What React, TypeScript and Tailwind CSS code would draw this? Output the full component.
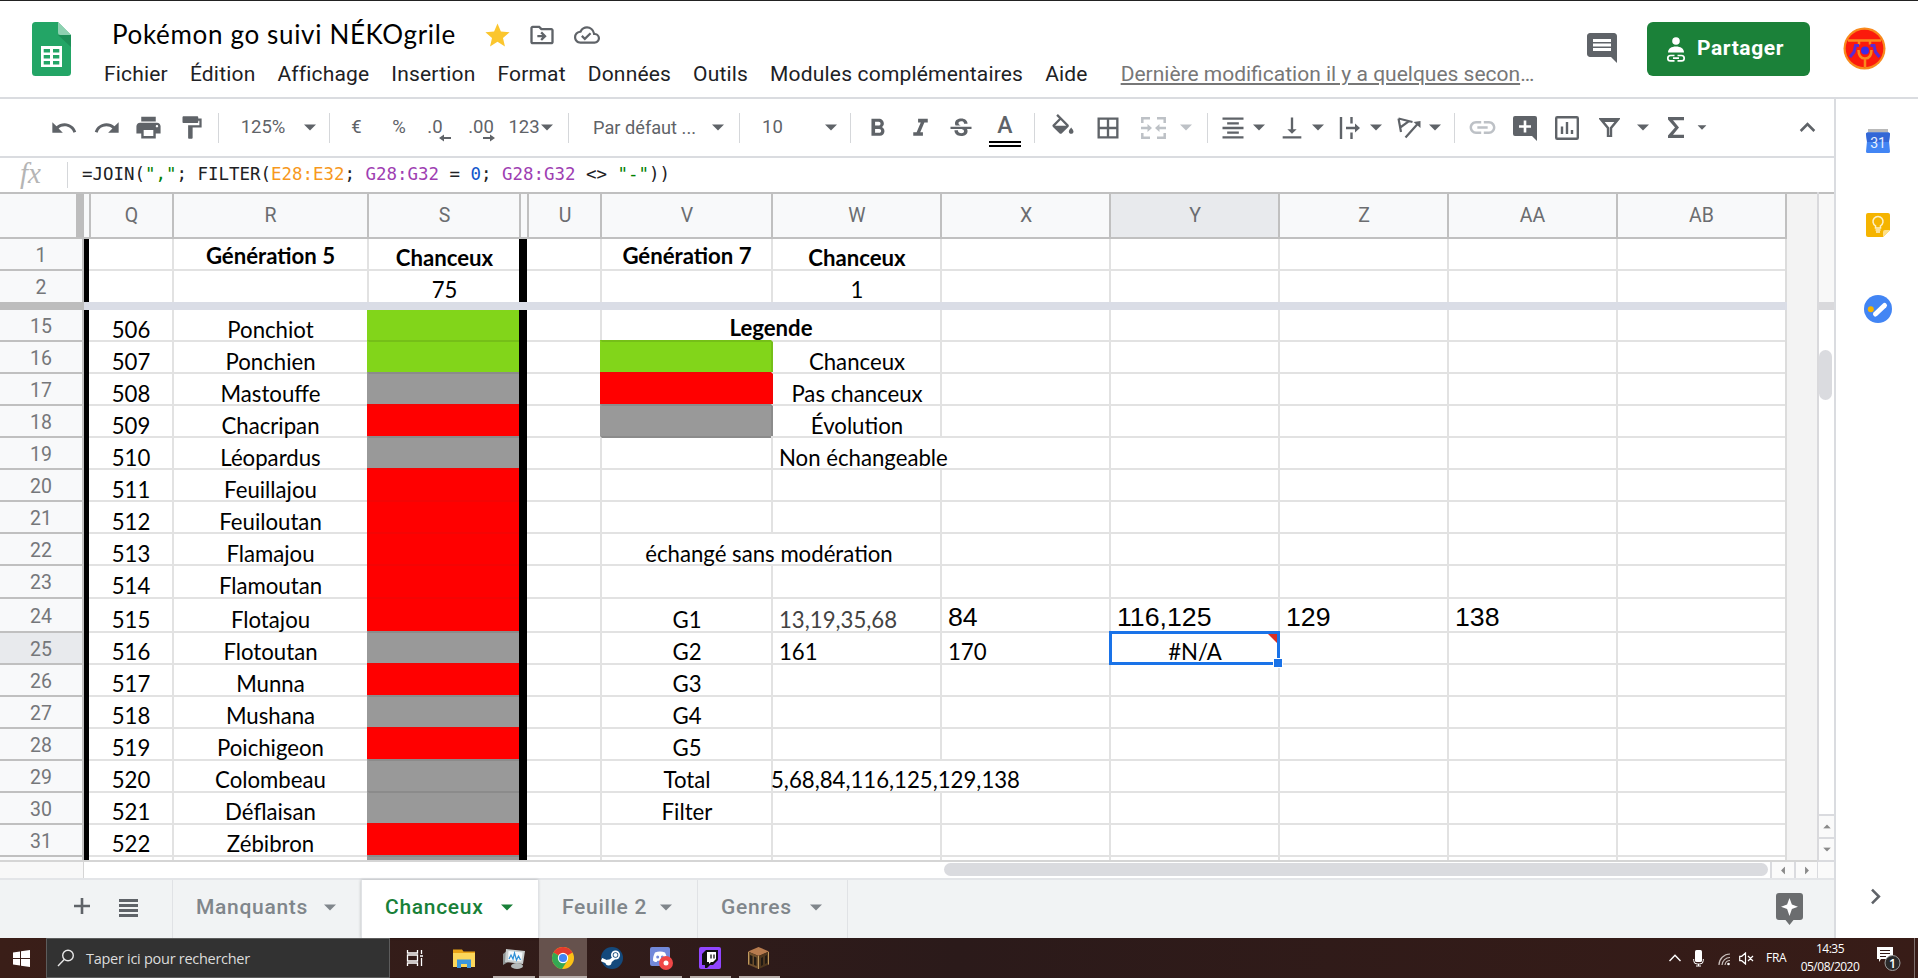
import type { ReactNode } from 'react';
import clsx from 'clsx';
import {
    MdUndo, MdRedo, MdPrint, MdFormatPaint, MdFormatBold, MdFormatItalic, MdStrikethroughS,
    MdFormatColorFill, MdBorderAll, MdFormatAlignCenter, MdVerticalAlignBottom, MdLink,
    MdKeyboardArrowUp, MdKeyboardArrowRight, MdStar, MdOutlineDriveFileMove, MdOutlineCloudDone,
} from 'react-icons/md';

type Fill = 'green' | 'gray' | 'red';

type Cell = {
    text?: string;
    fill?: Fill;
    align?: 'left' | 'center';
    className?: string;
    arial?: boolean;
    span?: boolean;
    noLine?: boolean;
};

type Row = {
    n: number;
    height: string;
    first?: boolean;
    cells: Record<string, Cell>;
};

const columns = [
    { id: 'P', width: 'w-[5px]' },
    { id: 'Q', width: 'w-[83px]' },
    { id: 'R', width: 'w-[195px]' },
    { id: 'S', width: 'w-[152px]' },
    { id: 'T', width: 'w-[8px]' },
    { id: 'U', width: 'w-[73px]' },
    { id: 'V', width: 'w-[171px]' },
    { id: 'W', width: 'w-[169px]' },
    { id: 'X', width: 'w-[169px]' },
    { id: 'Y', width: 'w-[169px]' },
    { id: 'Z', width: 'w-[169px]' },
    { id: 'AA', width: 'w-[169px]' },
    { id: 'AB', width: 'w-[169px]' },
];

const fills: Record<Fill, string> = {
    green: 'bg-[#82d51a] border-t-[#75bf18] border-l-[#82d51a]',
    gray: 'bg-[#999999] border-t-[#8b8b8b] border-l-[#999999]',
    red: 'bg-[#ff0000] border-t-[#f40404] border-l-[#ff0000]',
};

const frozenRows: Row[] = [
    {
        n: 1, height: 'h-[30px]', first: true,
        cells: {
            R: { text: 'Génération 5', className: 'font-bold pb-[3px]' },
            S: { text: 'Chanceux', className: 'font-bold pb-[1px]' },
            V: { text: 'Génération 7', className: 'font-bold pb-[3px]' },
            W: { text: 'Chanceux', className: 'font-bold pb-[1px]' },
        },
    },
    {
        n: 2, height: 'h-[33px]',
        cells: { S: { text: '75', className: 'pb-[2px]' }, W: { text: '1', className: 'pb-[2px]' } },
    },
];

const dex: [number, string, Fill][] = [
    [506, 'Ponchiot', 'green'],
    [507, 'Ponchien', 'green'],
    [508, 'Mastouffe', 'gray'],
    [509, 'Chacripan', 'red'],
    [510, 'Léopardus', 'gray'],
    [511, 'Feuillajou', 'red'],
    [512, 'Feuiloutan', 'red'],
    [513, 'Flamajou', 'red'],
    [514, 'Flamoutan', 'red'],
    [515, 'Flotajou', 'red'],
    [516, 'Flotoutan', 'gray'],
    [517, 'Munna', 'red'],
    [518, 'Mushana', 'gray'],
    [519, 'Poichigeon', 'red'],
    [520, 'Colombeau', 'gray'],
    [521, 'Déflaisan', 'gray'],
    [522, 'Zébibron', 'red'],
];

const extras: Record<number, Record<string, Cell>> = {
    15: { V: { text: 'Legende', span: true, className: 'font-bold pb-[2px]' } },
    16: { V: { fill: 'green' }, W: { text: 'Chanceux', className: 'border-l-[#75bf18]' } },
    17: { V: { fill: 'red' }, W: { text: 'Pas chanceux', className: 'border-l-[#f40404]' } },
    18: { V: { fill: 'gray' }, W: { text: 'Évolution', className: 'border-l-[#8b8b8b]' } },
    19: { V: { className: 'border-t-[#8b8b8b]' }, W: { text: 'Non échangeable', align: 'left' }, X: { noLine: true } },
    22: { V: { text: 'échangé sans modération', span: true, className: 'pr-[4px]' } },
    24: {
        V: { text: 'G1' },
        W: { text: '13,19,35,68', align: 'left', className: 'text-[#434343]' },
        X: { text: '84', align: 'left', arial: true },
        Y: { text: '116,125', align: 'left', arial: true },
        Z: { text: '129', align: 'left', arial: true },
        AA: { text: '138', align: 'left', arial: true },
    },
    25: {
        V: { text: 'G2' },
        W: { text: '161', align: 'left' },
        X: { text: '170', align: 'left' },
        Y: { text: '#N/A' },
    },
    26: { V: { text: 'G3' } },
    27: { V: { text: 'G4' } },
    28: { V: { text: 'G5' } },
    29: {
        V: { text: 'Total' },
        W: { text: '5,68,84,116,125,129,138', align: 'left', className: '-indent-[8px]' },
        X: { noLine: true },
    },
    30: { V: { text: 'Filter' } },
};

const heights: Record<number, string> = { 15: 'h-[30px]', 23: 'h-[33px]', 24: 'h-[34px]' };

const bodyRows: Row[] = [
    ...dex.map(([id, name, fill], i) => ({
        n: 15 + i,
        height: heights[15 + i] ?? 'h-[32px]',
        first: i === 0,
        cells: { Q: { text: String(id) }, R: { text: name }, S: { fill }, ...extras[15 + i] } as Record<string, Cell>,
    })),
    { n: 32, height: 'h-[5px]', cells: { S: { fill: 'gray' as Fill } } },
];

function SheetRow({ row }: { row: Row }) {
    const spanned = row.cells.V?.span;
    return (
        <div className={clsx('flex', row.height)}>
            <div
                className={clsx(
                    'w-[84px] shrink-0 flex items-center justify-center border-r-2 border-[#c0c0c0] text-[19.5px] text-[#75777a] overflow-hidden pt-[3px] leading-none',
                    !row.first && 'border-t-2',
                    row.n === 25 ? 'bg-[#e8eaed]' : 'bg-[#f8f9fa]',
                )}
            >
                {row.n < 32 && row.n}
            </div>
            {columns.map((col) => {
                if (col.id === 'P' || col.id === 'T') {
                    return <div key={col.id} className={clsx('bg-black shrink-0', col.width)} />;
                }
                if (col.id === 'W' && spanned) return null;
                const cell = row.cells[col.id] ?? {};
                const bare = col.id === 'Q' || col.id === 'U' || cell.noLine;
                return (
                    <div
                        key={col.id}
                        className={clsx(
                            'relative shrink-0 flex items-end whitespace-nowrap border-[#e2e2e2]',
                            cell.span ? 'w-[340px]' : col.width,
                            cell.arial
                                ? "font-['Liberation_Sans',sans-serif] text-[26.7px] leading-[26px] pb-[1px]"
                                : 'font-[Lato,sans-serif] text-[22.2px] leading-[21px]',
                            !row.first && 'border-t-2',
                            !bare && 'border-l-2',
                            cell.align === 'left' ? 'pl-[6px]' : 'justify-center',
                            cell.align !== 'left' && !cell.span && col.id !== 'R' && 'pl-[1px]',
                            row.n > 22 && row.n < 32 && !cell.arial && 'pb-[1px]',
                            cell.fill && fills[cell.fill],
                            cell.className,
                        )}
                    >
                        {/* Text stays above the grid lines of the next row */}
                        {cell.text && <span className="relative z-10">{cell.text}</span>}
                        {row.n === 25 && col.id === 'Y' && <Selection />}
                    </div>
                );
            })}
            <div className="w-[2px] bg-[#dcdcdc]" />
        </div>
    );
}

function Selection() {
    return (
        <div className="absolute -left-[2px] -top-[2px] w-[171px] h-[34px] border-[3px] border-[#1a73e8] z-20">
            <svg className="absolute right-0 top-0" width="9" height="9">
                <path d="M0 0h9v9z" fill="#d93025" />
            </svg>
            <div className="absolute -right-[6px] -bottom-[6px] w-[10px] h-[10px] bg-[#1a73e8] border border-white" />
        </div>
    );
}

function Caret({ className }: { className?: string }) {
    return (
        <svg width="12" height="7" viewBox="0 0 12 7" className={clsx('shrink-0', className)}>
            <path d="M0 0.5h12L6 6.5z" fill="currentColor" />
        </svg>
    );
}

function Tool({ w, children }: { w: string; children?: ReactNode }) {
    return <div className={clsx('shrink-0 h-full flex items-center justify-center', w)}>{children}</div>;
}

function Sep({ w }: { w: string }) {
    return (
        <Tool w={w}>
            <div className="w-px h-[30px] bg-[#d5d7da]" />
        </Tool>
    );
}

const menus = ['Fichier', 'Édition', 'Affichage', 'Insertion', 'Format', 'Données', 'Outils', 'Modules complémentaires', 'Aide'];

function Header() {
    return (
        <header className="flex h-[99px] border-t border-[#222222] border-b-2 border-b-[#dadce0]">
            <svg className="ml-8 mt-[21px] shrink-0" width="39" height="54" viewBox="0 0 39 54">
                <path d="M3.500 0H26L39 13V50.500a3.500 3.500 0 0 1-3.500 3.500H3.500A3.500 3.500 0 0 1 0 50.500V3.500A3.500 3.500 0 0 1 3.500 0z" fill="#23a566" />
                <path d="M26 13h13v12z" fill="#1c8f57" />
                <path d="M26 0l13 13H28.500A2.500 2.500 0 0 1 26 10.500z" fill="#8ed1b1" />
                <path d="M9 24h21v21H9z" fill="#fff" />
                <path d="M11.700 27h6.300v3.500h-6.300zM21 27h6.300v3.500H21zM11.700 33h6.300v3.500h-6.300zM21 33h6.300v3.500H21zM11.700 39h6.300v3.500h-6.300zM21 39h6.300v3.500H21z" fill="#23a566" />
            </svg>
            <div className="flex flex-col ml-[34px]">
                <div className="flex items-center h-[46px] mt-[11px] pl-[7px] text-[#5f6368]">
                    <span className="w-[371px] -mt-[2px] font-[Lato,sans-serif] text-[26px] tracking-[0.66px] text-black whitespace-nowrap">
                        Pokémon go suivi NÉKOgrile
                    </span>
                    <MdStar className="text-[#fbc62e]" size={29} />
                    <MdOutlineDriveFileMove className="ml-[16px]" size={28} />
                    <MdOutlineCloudDone className="ml-[18px]" size={26} />
                </div>
                <nav className="flex items-center gap-[22px] h-8 pt-px text-[21px] tracking-[0.18px] text-[#202124] whitespace-nowrap -ml-px">
                    {menus.map((m) => (
                        <span key={m}>{m}</span>
                    ))}
                    <span className="ml-[11px] text-[#777777] tracking-normal">
                        <span className="underline">Dernière modification il y a quelques secon</span>…
                    </span>
                </nav>
            </div>
            <div className="flex ml-auto shrink-0">
                <svg className="mt-[32px]" width="30" height="30" viewBox="2 2 20 20">
                    <path d="M21.990 4c0-1.100-.89-2-1.990-2H4c-1.100 0-2 .9-2 2v12c0 1.100.9 2 2 2h14l4 4-.01-18zM18 14H6v-2h12v2zm0-3H6V9h12v2zm0-3H6V6h12v2z" fill="#5f6368" />
                </svg>
                <button className="flex items-center ml-[30px] mt-[21px] w-[163px] h-[54px] rounded-[6px] bg-[#1b8139] text-white">
                    <svg className="ml-[19px]" width="20" height="27" viewBox="0 0 20 27">
                        <circle cx="10" cy="5" r="3.800" fill="#fff" />
                        <path d="M2 16.500c0-4 3.500-6 8-6s8 2 8 6z" fill="#fff" />
                        <path d="M8.500 19.500H4.500a2.700 2.700 0 0 0 0 5.400h4M11.500 19.500h4a2.700 2.700 0 0 1 0 5.400h-4M7 22.200h6" fill="none" stroke="#fff" strokeWidth="1.700" />
                    </svg>
                    <span className="ml-[11px] text-[21px] font-bold tracking-[0.6px]">Partager</span>
                </button>
                <svg className="ml-[33px] mr-[32px] mt-[26px]" width="43" height="43" viewBox="0 0 43 43">
                    <circle cx="21.500" cy="21.500" r="21" fill="#f98a1c" />
                    <circle cx="21.500" cy="21.500" r="18.800" fill="#fb1a0c" />
                    <path d="M5 13.500h11v4M38 13.500H27v4M14 13.500h15M22 31v9M15.500 23c0 6 3 8.500 6.500 8.500s6.500-2.500 6.500-8.500" stroke="#f98a1c" strokeWidth="2.500" fill="none" />
                    <path d="M16 18.500h-3.500L11 25l-4 5M27.500 18.500H31L32.500 25l4 5" stroke="#5a2bd0" strokeWidth="3" fill="none" />
                    <circle cx="22" cy="23.500" r="4" fill="#3b2be8" />
                </svg>
            </div>
        </header>
    );
}

function Toolbar() {
    return (
        <div className="flex items-center h-[59px] pl-[42px] border-b-2 border-[#dadce0] text-[#5f6368] text-[18.5px]">
            <Tool w="w-[43px]"><MdUndo size={28} /></Tool>
            <Tool w="w-[43px]"><MdRedo size={28} /></Tool>
            <Tool w="w-[41px]"><MdPrint size={29} /></Tool>
            <Tool w="w-[44px]"><MdFormatPaint size={27} /></Tool>
            <Sep w="w-[10px]" />
            <Tool w="w-[80px]">125%</Tool>
            <Tool w="w-[14px]"><Caret /></Tool>
            <Sep w="w-[24px]" />
            <Tool w="w-[31px] pt-px">€</Tool>
            <Tool w="w-[54px] pt-px">%</Tool>
            <Tool w="w-[26px] pt-px">
                <span className="relative -left-[4px]">.0<Arrow className="left-[12px]" /></span>
            </Tool>
            <Tool w="w-[58px] pt-px">
                <span className="relative">.00<Arrow className="left-[15px] -scale-x-100" /></span>
            </Tool>
            <Tool w="w-[28px] pt-px">123</Tool>
            <Tool w="w-[18px]"><Caret /></Tool>
            <Sep w="w-[24px]" />
            <Tool w="w-[126px] pt-px pl-[3px] text-[18.2px]">Par défaut ...</Tool>
            <Tool w="w-[24px]"><Caret /></Tool>
            <Sep w="w-[18px]" />
            <div className="w-[71px] pl-[14px]">10</div>
            <Tool w="w-[24px]"><Caret /></Tool>
            <Sep w="w-[14px]" />
            <Tool w="w-[40px] pt-[2px]"><MdFormatBold size={29} /></Tool>
            <Tool w="w-[46px] pt-[2px]"><MdFormatItalic size={29} /></Tool>
            <Tool w="w-[36px] pt-[2px]"><MdStrikethroughS size={28} /></Tool>
            <Tool w="w-[52px]">
                <div className="flex flex-col items-center gap-[3px] pt-[6px]">
                    <span className="text-[23px] font-medium leading-[24px]">A</span>
                    <span className="w-8 h-[6px] border-y-2 border-black" />
                </div>
            </Tool>
            <Sep w="w-[7px]" />
            <Tool w="w-[50px]"><MdFormatColorFill size={28} className="[clip-path:inset(0_0_20%_0)]" /></Tool>
            <Tool w="w-[39px]"><MdBorderAll size={28} /></Tool>
            <Tool w="w-[53px] pt-px">
                <svg width="25" height="22" viewBox="0 0 25 22" className="text-[#bdc1c6]">
                    <path d="M1.300 6V1.300H9M16 1.300h7.700V6M1.300 16v4.700H9M16 20.700h7.700V16M0 11h8M25 11h-8" stroke="currentColor" strokeWidth="2.500" fill="none" />
                    <path d="M6.500 7l4.500 4-4.500 4zM18.500 7L14 11l4.500 4z" fill="currentColor" />
                </svg>
            </Tool>
            <Tool w="w-[12px]"><Caret className="text-[#bdc1c6]" /></Tool>
            <Sep w="w-[30px]" />
            <Tool w="w-[22px]"><MdFormatAlignCenter size={28} className="shrink-0" /></Tool>
            <Tool w="w-[30px]"><Caret /></Tool>
            <Tool w="w-[17px] ml-[9px]"><MdVerticalAlignBottom size={28} className="shrink-0" /></Tool>
            <Tool w="w-[35px]"><Caret /></Tool>
            <Tool w="w-[30px]">
                <svg width="22" height="22" viewBox="0 0 22 22" fill="none" stroke="currentColor" strokeWidth="2.400">
                    <path d="M2 0v22M12.500 0v6.500M12.500 15.500V22M7 11h11" />
                    <path d="M16 6.500l5 4.500-5 4.500z" fill="currentColor" stroke="none" />
                </svg>
            </Tool>
            <Tool w="w-[21px]"><Caret /></Tool>
            <Tool w="w-[46px]">
                <svg width="25" height="22" viewBox="0 0 25 22" fill="none" stroke="currentColor" strokeWidth="2.200">
                    <path d="M1.500 1.500l14 3.500M1.500 1.500L4 15M12 4.200L3.200 10.500M8.500 20.500L21 6.500" />
                    <path d="M23.500 4v7l-7-6z" fill="currentColor" stroke="none" />
                </svg>
            </Tool>
            <Tool w="w-[6px]"><Caret /></Tool>
            <Sep w="w-[33px]" />
            <Tool w="w-[23px]"><MdLink size={31} className="shrink-0 text-[#bdc1c6]" /></Tool>
            <Tool w="w-[61px] pt-px">
                <svg width="24" height="25" viewBox="0 0 24 25">
                    <path d="M2 0h20a2 2 0 0 1 2 2v23l-5-5H2a2 2 0 0 1-2-2V2a2 2 0 0 1 2-2z" fill="currentColor" />
                    <path d="M12 4.500v12M6 10.500h12" stroke="#fff" strokeWidth="2.600" />
                </svg>
            </Tool>
            <Tool w="w-[24px] pt-px">
                <svg width="24" height="24" viewBox="0 0 24 24" fill="none" stroke="currentColor">
                    <rect x="1.200" y="1.200" width="21.600" height="21.600" rx="1" strokeWidth="2.400" />
                    <path d="M7 10.500V18M12 6v12M17 14v4" strokeWidth="2.400" />
                </svg>
            </Tool>
            <Tool w="w-[61px]">
                <svg width="21" height="19" viewBox="0 0 21 19">
                    <path d="M1.800 1.300h17.400L12 10v8.500H9V10z" fill="none" stroke="currentColor" strokeWidth="2.400" />
                    <path d="M1 1h19l-2.500 3h-14z" fill="currentColor" />
                </svg>
            </Tool>
            <Tool w="w-[6px]"><Caret /></Tool>
            <Tool w="w-[32px] ml-[14px]">
                <svg width="16" height="21" viewBox="0 0 16 21">
                    <path d="M16 0v3.200H5L11 10.500 5 17.800H16V21H0v-2.500L7 10.500 0 2.500V0z" fill="currentColor" />
                </svg>
            </Tool>
            <Tool w="w-[20px]"><Caret className="scale-75" /></Tool>
            <MdKeyboardArrowUp size={31} className="ml-auto mr-[11px]" />
        </div>
    );
}

function Arrow({ className }: { className: string }) {
    return (
        <svg className={clsx('absolute top-[20px]', className)} width="12" height="8" viewBox="0 0 12 8">
            <path d="M12 3H5V0.500L0 4l5 3.500V5h7z" fill="currentColor" />
        </svg>
    );
}

function FormulaBar() {
    return (
        <div className="flex items-center h-[34px] whitespace-pre">
            <span className="w-[67px] pl-[20px] pb-1 font-['Liberation_Serif',serif] italic text-[29px] leading-[30px] text-[#b5b5b5]">fx</span>
            <div className="w-px h-[26px] bg-[#d5d7da]" />
            <div className="ml-[14px] -mt-[1px] font-['DejaVu_Sans_Mono',monospace] text-[17.44px] text-[#202124]">
                =JOIN(<span className="text-[#008000]">","</span>; FILTER(
                <span className="text-[#f7981d]">E28:E32</span>; <span className="text-[#9e3eb2]">G28:G32</span> ={' '}
                <span className="text-[#1155cc]">0</span>; <span className="text-[#9e3eb2]">G28:G32</span> {'<>'}{' '}
                <span className="text-[#008000]">"-"</span>))
            </div>
        </div>
    );
}

function Sheet() {
    return (
        <div className="flex">
            <div className="w-[1787px] shrink-0 overflow-hidden h-[670px] border-b-2 border-[#d5d5d5]">
                <div className="flex h-[47px] border-y-2 border-[#c0c0c0] bg-[#f8f9fa] text-[19.5px] text-[#6b6d70]">
                    <div className="w-[84px] shrink-0 border-r-8 border-[#bdbdbd]" />
                    {columns.map((col) => (
                        <div
                            key={col.id}
                            className={clsx(
                                'shrink-0 flex items-center justify-center border-[#c0c0c0]',
                                col.width,
                                col.id !== 'P' && 'border-l-2',
                                col.id > 'R' && 'pl-px',
                                col.id === 'Y' && 'bg-[#e8eaed]',
                            )}
                        >
                            {col.id !== 'P' && col.id !== 'T' && col.id}
                        </div>
                    ))}
                    <div className="w-[2px] bg-[#c0c0c0]" />
                </div>
                {frozenRows.map((row) => (
                    <SheetRow key={row.n} row={row} />
                ))}
                <div className="flex h-[8px]">
                    <div className="w-[84px] bg-[#bdbdbd]" />
                    <div className="flex-1 bg-[#dadde6]" />
                </div>
                {bodyRows.map((row) => (
                    <SheetRow key={row.n} row={row} />
                ))}
            </div>
            <div className="w-[30px] bg-[#f3f3f3] border-t-2 border-t-[#c0c0c0] border-b-2 border-b-[#d5d5d5]" />
            {/* Vertical scrollbar */}
            <div className="w-[17px] flex flex-col border-l-2 border-[#d9d9dc] text-[#8a8a8a]">
                <div className="h-[110px] bg-[#f8f8f8] border-t-2 border-[#c0c0c0]" />
                <div className="h-[8px] bg-[#d9d9dc]" />
                <div className="flex-1 pt-[40px]">
                    <div className="w-[13px] h-[50px] rounded-full bg-[#dadbdf]" />
                </div>
                <div className="h-[23px] flex items-center justify-center border-t-2 border-[#dadbdf] bg-[#fafafa]">
                    <Caret className="scale-[0.65] rotate-180" />
                </div>
                <div className="h-[25px] flex items-center justify-center border-y-2 border-[#dadbdf] bg-[#fafafa]">
                    <Caret className="scale-[0.65]" />
                </div>
            </div>
        </div>
    );
}

function HorizontalScrollbar() {
    return (
        <div className="flex h-[18px] border-b-2 border-[#e3e5e8] text-[#8a8a8a]">
            <div className="w-[84px] bg-[#f8f8f8] border-r border-[#d5d5d5]" />
            <div className="flex-1 flex justify-end pr-[2px] pt-[1px]">
                <div className="w-[824px] h-[13px] rounded-full bg-[#dadbdf]" />
            </div>
            <div className="w-[24px] flex items-center justify-center border-l-2 border-[#dadbdf] bg-[#fafafa]">
                <Caret className="scale-[0.65] rotate-90" />
            </div>
            <div className="w-[23px] flex items-center justify-center border-l-2 border-[#dadbdf] bg-[#fafafa]">
                <Caret className="scale-[0.65] -rotate-90" />
            </div>
            <div className="w-[17px] border-l border-[#dadbdf] bg-[#fafafa]" />
        </div>
    );
}

const tabs = [
    { name: 'Manquants', width: 'w-[189px]' },
    { name: 'Chanceux', width: 'w-[177px]', active: true },
    { name: 'Feuille 2', width: 'w-[159px]' },
    { name: 'Genres', width: 'w-[150px]' },
];

function SheetTabs() {
    return (
        <div className="flex h-[58px] bg-[#f1f3f4] text-[#5f6368]">
            <div className="flex items-center w-[172px] shrink-0 pb-[3px]">
                <svg className="ml-[74px] -mt-[3px]" width="16" height="16" viewBox="0 0 16 16">
                    <path d="M8 0v16M0 8h16" stroke="currentColor" strokeWidth="2.600" />
                </svg>
                <svg className="ml-[29px]" width="19" height="18" viewBox="0 0 19 18">
                    <path d="M0 1.500h19M0 6.500h19M0 11.500h19M0 16.500h19" stroke="currentColor" strokeWidth="2.800" />
                </svg>
            </div>
            {tabs.map((tab) => (
                <div
                    key={tab.name}
                    className={clsx(
                        'flex items-center justify-between shrink-0 pl-[23px] pr-[25px] pb-[3px] text-[21px] font-medium border-l border-[#e0e2e5] tracking-[0.7px]',
                        tab.width,
                        tab.active ? 'bg-white text-[#188038] shadow-[0_0_3px_rgba(0,0,0,0.25)]' : 'text-[#80868b]',
                    )}
                >
                    {tab.name}
                    <Caret />
                </div>
            ))}
            <div className="flex-1 flex items-center justify-end border-l border-[#e0e2e5] pr-[31px]">
                <svg width="27" height="32" viewBox="0 0 27 32">
                    <path d="M3 0h21a3 3 0 0 1 3 3v21a3 3 0 0 1-3 3h-6.500L13.500 32l-4-5H3a3 3 0 0 1-3-3V3a3 3 0 0 1 3-3z" fill="#6b6d6f" />
                    <path d="M13.500 5l2.400 6.500L22 13.800l-6.100 2.300L13.500 23l-2.400-6.900L5 13.800l6.100-2.300z" fill="#fff" />
                </svg>
            </div>
        </div>
    );
}

function SidePanel() {
    return (
        <aside className="flex-1 flex flex-col items-center border-l-2 border-[#dadce0] pl-[2px]">
            <svg className="mt-[30px]" width="24" height="24" viewBox="0 0 24 24">
                <path d="M2 0h20v6H2z" fill="#b9b9b9" />
                <path d="M0 5a1.500 1.500 0 0 1 1.500-1.500h21A1.500 1.500 0 0 1 24 5l-1 7 1 10.500a1.500 1.500 0 0 1-1.500 1.500h-21A1.500 1.500 0 0 1 0 22.500L1 12z" fill="#4285f4" />
                <path d="M0 5a1.500 1.500 0 0 1 1.500-1.500h21A1.500 1.500 0 0 1 24 5l-1 8H1z" fill="#3367d6" />
                <text x="12" y="19" textAnchor="middle" fontSize="14" fill="#e8f0fe" className="font-[Roboto,sans-serif]">31</text>
            </svg>
            <svg className="mt-[60px]" width="24" height="24" viewBox="0 0 24 24">
                <path d="M2 0h20a2 2 0 0 1 2 2v15l-7 7H2a2 2 0 0 1-2-2V2a2 2 0 0 1 2-2z" fill="#f5b400" />
                <path d="M24 17l-7 7v-5a2 2 0 0 1 2-2z" fill="#fde08a" />
                <path d="M9.500 15v-2.200A5 5 0 1 1 14.500 12.800V15zM9.500 17h5M10 19h4" fill="none" stroke="#fdf1c8" strokeWidth="1.500" />
            </svg>
            <svg className="mt-[58px]" width="28" height="28" viewBox="0 0 28 28">
                <circle cx="14" cy="14" r="14" fill="#4285f4" />
                <path d="M11.500 19L20.500 10.500" stroke="#fff" strokeWidth="5" strokeLinecap="round" />
                <circle cx="6.800" cy="14.300" r="3" fill="#f5b400" />
            </svg>
            <MdKeyboardArrowRight className="mt-auto mb-[26px] mr-[5px] text-[#5f6368]" size={31} />
        </aside>
    );
}

function TaskItem({ children, w = 'w-[49px]', line, active }: { children: ReactNode; w?: string; line?: boolean; active?: boolean }) {
    return (
        <div className={clsx('relative shrink-0 h-full flex items-center justify-center', w, active && 'bg-[#66524d]')}>
            {children}
            {line && <div className={clsx('absolute bottom-0 h-[2px] bg-[#b8aeab]', active ? 'inset-x-0' : 'inset-x-[4px]')} />}
        </div>
    );
}

function Taskbar() {
    return (
        <footer className="flex items-center h-10 bg-linear-to-r from-[#3a1e18] via-[#2b1a1a] to-[#381c17] text-white font-['Open_Sans',sans-serif] text-[13px]">
            <div className="w-[46px] flex justify-center">
                <svg width="17" height="17" viewBox="0 0 17 17" fill="#fff" className="-ml-[3px]">
                    <path d="M0 2.400L7 1.400V8H0zM8 1.200L17 0v8H8zM0 9h7v6.600L0 14.600zM8 9h9v8L8 15.800z" />
                </svg>
            </div>
            <div className="w-[344px] h-10 flex items-center bg-[#323232] border border-[#5c5c5c]">
                <svg className="ml-[10px]" width="18" height="18" viewBox="0 0 18 18" fill="none" stroke="#e8e8e8" strokeWidth="1.400">
                    <circle cx="11" cy="6.500" r="5.300" />
                    <path d="M7.200 10.500L1 17" />
                </svg>
                <span className="ml-[11px] pt-px text-[14.5px] tracking-[-0.28px] text-[#dcdcdc]">Taper ici pour rechercher</span>
            </div>
            <TaskItem>
                <svg width="18" height="16" viewBox="0 0 18 16" fill="none" stroke="#fff" strokeWidth="1.300">
                    <path d="M1.500 0v3h10V0M1.500 16v-3h10v3M1.500 5h10v6h-10zM15.500 0v4M15.500 8v8M14 6h3" />
                </svg>
            </TaskItem>
            <TaskItem w="w-[50px]">
                <svg width="22" height="19" viewBox="0 0 22 19">
                    <path d="M0 0.500h9l1.500 2H22V18H0z" fill="#e8a317" />
                    <path d="M0 4h22v14H0z" fill="#fbd75b" />
                    <path d="M4 10.500h14V19h-4v-4H8v4H4z" fill="#3a96dd" />
                </svg>
            </TaskItem>
            <TaskItem w="w-[50px]" line>
                <svg width="24" height="21" viewBox="0 0 24 21" className="-ml-px">
                    <path d="M1 6l5-4v12l-5 3z" fill="#8e9494" />
                    <path d="M4 1l19 2-2 13L3 14z" fill="#c8cdcd" />
                    <path d="M6.500 3l14 1.500-1.200 9L6 12z" fill="#f4f9fc" />
                    <path d="M7 11l2-4 2 4 1.500-6 2 7 2-4 2 4" fill="none" stroke="#2c8fd6" strokeWidth="1.200" />
                    <ellipse cx="15" cy="18" rx="6" ry="3" fill="#b4b9b9" />
                </svg>
            </TaskItem>
            <TaskItem w="w-[48px]" line active>
                <svg width="22" height="22" viewBox="0 0 22 22">
                    <circle cx="11" cy="11" r="11" fill="#fbc116" />
                    <path d="M11 11L1.470 5.500A11 11 0 0 1 20.530 5.500z" fill="#e33b2e" />
                    <path d="M11 11L1.470 5.500A11 11 0 0 0 10 21.950L15.500 13.500z" fill="#34a853" />
                    <circle cx="11" cy="11" r="5.200" fill="#fff" />
                    <circle cx="11" cy="11" r="4.100" fill="#4285f4" />
                </svg>
            </TaskItem>
            <TaskItem>
                <svg width="22" height="22" viewBox="0 0 22 22">
                    <circle cx="11" cy="11" r="11" fill="#14497c" />
                    <path d="M0.500 12.500l7 3 5.500-4.500" stroke="#fff" strokeWidth="3.500" fill="none" />
                    <circle cx="14.500" cy="8" r="4.500" fill="#fff" />
                    <circle cx="14.500" cy="8" r="2.800" fill="#14497c" />
                    <circle cx="14.500" cy="8" r="2" fill="#fff" />
                    <circle cx="7.500" cy="15.500" r="3" fill="#fff" />
                </svg>
            </TaskItem>
            <TaskItem w="w-[50px]" line>
                <svg width="23" height="23" viewBox="0 0 23 23">
                    <rect width="20" height="19" rx="2" fill="#7289da" />
                    <path d="M5 5.500c3.500-1.500 6.500-1.500 10 0 1.300 2.500 2 5 2 8-1 1-2.200 1.500-3.500 1.500l-1-1.300h-5L6.500 15C5.200 15 4 14.500 3 13.500c0-3 .7-5.500 2-8z" fill="#fff" />
                    <circle cx="7.700" cy="10" r="1.500" fill="#7289da" />
                    <circle cx="12.300" cy="10" r="1.500" fill="#7289da" />
                    <circle cx="16" cy="16" r="7" fill="#f04747" />
                    <circle cx="16" cy="16" r="2.500" fill="#fff" />
                </svg>
            </TaskItem>
            <TaskItem line>
                <svg width="22" height="22" viewBox="0 0 22 22" className="-ml-[2px]">
                    <rect width="22" height="22" rx="2" fill="#9146ff" />
                    <path d="M3 7l4-4h12v10l-5 5h-3l-3 3H6v-3H3z" fill="#111" />
                    <path d="M8 5h9v7l-3 3h-2l-2 2v-2H8z" fill="#fff" />
                    <path d="M12 7.500v4M15 7.500v4" stroke="#111" strokeWidth="1.300" />
                </svg>
            </TaskItem>
            <TaskItem line>
                <svg width="21" height="22" viewBox="0 0 21 22" className="-ml-[2px]">
                    <path d="M10.500 0L21 4.500 10.500 9 0 4.500z" fill="#b77b4e" />
                    <path d="M0 4.500L10.500 9v13L0 17.500z" fill="#6f4f2c" />
                    <path d="M21 4.500L10.500 9v13L21 17.500z" fill="#4f371e" />
                    <path d="M2 8l2.500 1v8.500L2 16.500zM6 9.500l2.500 1V19L6 18zM13 11l2-1v8l-2 1zM17 9l2-1v8l-2 1z" fill="#211a14" />
                    <path d="M10.500 9v13M0.500 5v12.500M20.500 5v12.500" stroke="#c09a5e" strokeWidth="1" />
                </svg>
            </TaskItem>
            {/* System tray */}
            <div className="ml-auto flex items-center h-full">
                <svg width="12" height="8" viewBox="0 0 12 8" fill="none" stroke="#fff" strokeWidth="1.400">
                    <path d="M0.500 7L6 1.200 11.500 7" />
                </svg>
                <svg className="ml-[12px]" width="11" height="17" viewBox="0 0 11 17">
                    <rect x="2" y="0" width="7" height="12" rx="1.500" fill="#fff" />
                    <path d="M.7 9v1.500a3.500 3.500 0 0 0 3.500 3.500h2.600a3.500 3.500 0 0 0 3.500-3.500V9M5.500 14v2M3 16h5" stroke="#fff" fill="none" />
                </svg>
                <svg className="ml-[14px] mt-[3px]" width="13" height="13" viewBox="0 0 13 13" fill="none" stroke="#c9bfbc" strokeWidth="1.200">
                    <path d="M1 12A11 11 0 0 1 12 1M4 12A8 8 0 0 1 12 4.500M7 12a5 5 0 0 1 5-4.500" />
                    <circle cx="10.500" cy="11" r="1.300" fill="#fff" stroke="none" />
                </svg>
                <svg className="ml-[8px]" width="15" height="13" viewBox="0 0 15 13" fill="none" stroke="#fff" strokeWidth="1.200">
                    <path d="M0.700 4.300h2L6.500 1v11L2.700 8.700h-2zM9 4l5 5M14 4L9 9" />
                </svg>
                <span className="ml-[12px] w-[24px] text-[12px] tracking-[-0.3px]">FRA</span>
                <div className="ml-[10px] w-[60px] flex flex-col items-center leading-[18px] text-[12px] tracking-[-0.5px]">
                    <span>14:35</span>
                    <span>05/08/2020</span>
                </div>
                <svg className="ml-[17px] mr-[13px] mt-[3px]" width="24" height="28" viewBox="0 0 24 28">
                    <path d="M0 1h16v12H4l-2 3v-3H0z" fill="#fff" />
                    <path d="M3 4.500h10M3 7.500h10M3 10.500h6" stroke="#331b17" />
                    <circle cx="15.500" cy="17" r="7.500" fill="#2a2a2a" stroke="#a0a0a0" />
                    <text x="15.500" y="21.500" textAnchor="middle" fontSize="12.500" fontWeight="600" fill="#fff">1</text>
                </svg>
                <div className="w-px h-full bg-[#7d6f6c] mr-[3px]" />
            </div>
        </footer>
    );
}

export default function App() {
    return (
        <div className="w-[1918px] h-[978px] overflow-hidden bg-white font-[Roboto,sans-serif] text-black">
            <Header />
            <div className="flex h-[839px]">
                <div className="w-[1834px] shrink-0">
                    <Toolbar />
                    <FormulaBar />
                    <Sheet />
                    <HorizontalScrollbar />
                    <SheetTabs />
                </div>
                <SidePanel />
            </div>
            <Taskbar />
        </div>
    );
}
